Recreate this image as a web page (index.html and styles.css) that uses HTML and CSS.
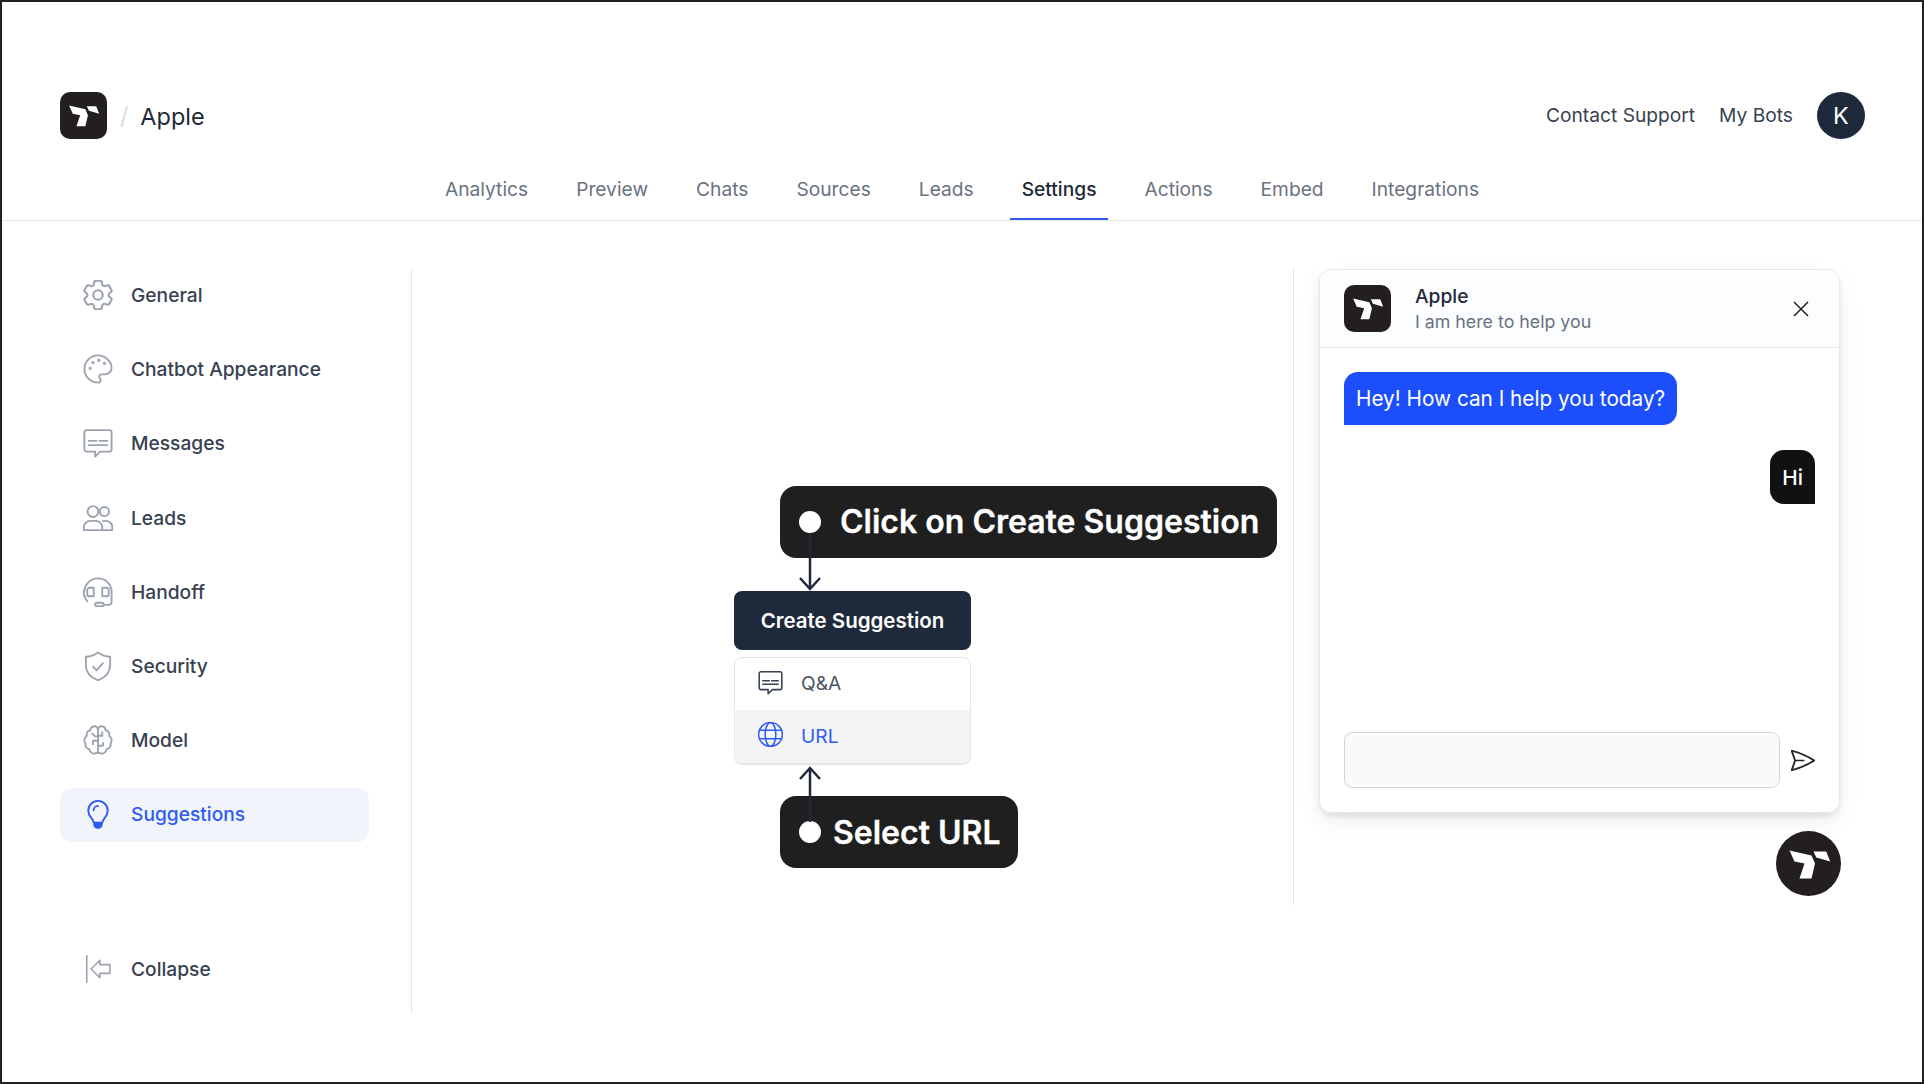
FILE: index.html
```html
<!DOCTYPE html>
<html lang="en">
<head>
  <meta charset="utf-8">
  <meta name="viewport" content="width=device-width, initial-scale=1">
  <title>Apple – Settings – Suggestions</title>
  <link rel="stylesheet" href="styles.css">
</head>

<body>
  <!-- Shared icons -->
  <svg class="sprite" width="0" height="0" aria-hidden="true">
    <symbol id="mark" viewBox="0 0 150 150">
      <path fill="currentColor" d="M16.500 34.500 L82.500 49.500 L93 73.500 L82.500 118.500 L46.500 118.500 L61.500 73.500 L31.500 67.500 Z"/>
      <path fill="currentColor" d="M88.500 37.500 L126.500 37.500 L138.500 67.500 L97 55.500 Z"/>
    </symbol>
    <symbol id="i-msg" viewBox="1.500 1.500 21 21">
      <path d="M4 3h16a1.500 1.500 0 0 1 1.500 1.500v12a1.500 1.500 0 0 1-1.500 1.500h-6.500l-3.500 3.500V18H4a1.500 1.500 0 0 1-1.500-1.500v-12A1.500 1.500 0 0 1 4 3z"/>
      <path d="M5.500 10.500h5.500M13 10.500h5.500M5.500 13.500h13"/>
    </symbol>
  </svg>

  <div class="frame">
    <header class="topbar">
      <div class="brand">
        <span class="logo"><svg><use href="#mark"/></svg></span>
        <span class="slash">/</span>
        <span class="brand-name">Apple</span>
      </div>
      <div class="top-links">
        <a href="#">Contact Support</a>
        <a href="#">My Bots</a>
        <span class="avatar">K</span>
      </div>
    </header>

    <nav class="tabs">
      <a href="#">Analytics</a>
      <a href="#">Preview</a>
      <a href="#">Chats</a>
      <a href="#">Sources</a>
      <a href="#">Leads</a>
      <a href="#" class="active">Settings</a>
      <a href="#">Actions</a>
      <a href="#">Embed</a>
      <a href="#">Integrations</a>
    </nav>

    <main class="main">
      <aside class="sidebar">
        <a href="#" class="side-item">
          <svg class="side-icon" viewBox="2.500 2.500 19 19"><path d="M9.594 3.940c.09-.542.56-.94 1.110-.94h2.593c.55 0 1.020.398 1.110.94l.213 1.281c.063.374.313.686.645.87.074.04.147.083.22.127.324.196.72.257 1.075.124l1.217-.456a1.125 1.125 0 011.370.49l1.296 2.247a1.125 1.125 0 01-.26 1.431l-1.003.827c-.293.24-.438.613-.431.992a6.759 6.759 0 010 .255c-.007.378.138.75.43.99l1.005.828c.424.35.534.954.26 1.430l-1.298 2.247a1.125 1.125 0 01-1.369.491l-1.217-.456c-.355-.133-.75-.072-1.076.124a6.570 6.570 0 01-.22.128c-.331.183-.581.495-.644.869l-.213 1.280c-.09.543-.56.941-1.110.941h-2.594c-.55 0-1.020-.398-1.110-.94l-.213-1.281c-.062-.374-.312-.686-.644-.87a6.520 6.520 0 01-.22-.127c-.325-.196-.72-.257-1.076-.124l-1.217.456a1.125 1.125 0 01-1.369-.49l-1.297-2.247a1.125 1.125 0 01.26-1.431l1.004-.827c.292-.24.437-.613.43-.992a6.932 6.932 0 010-.255c.007-.378-.138-.75-.43-.99l-1.004-.828a1.125 1.125 0 01-.26-1.430l1.297-2.247a1.125 1.125 0 011.370-.491l1.216.456c.356.133.751.072 1.076-.124.072-.044.146-.087.22-.128.332-.183.582-.495.644-.869l.214-1.281z"/><circle cx="12" cy="12" r="3"/></svg>
          General
        </a>
        <a href="#" class="side-item">
          <svg class="side-icon" viewBox="1.500 1.500 21 21"><path d="M12 2.500a9.500 9.500 0 1 0 0 19c1.100 0 1.800-.8 1.800-1.700 0-.5-.2-.9-.5-1.200-.3-.3-.5-.7-.5-1.100 0-.9.8-1.700 1.700-1.700h2.200c2.600 0 4.800-2 4.800-4.500 0-4.700-4.500-8.800-9.500-8.800z"/><circle cx="6.500" cy="11.500" r=".5"/><circle cx="8.500" cy="7.500" r=".5"/><circle cx="12.500" cy="6" r=".5"/><circle cx="16.500" cy="8" r=".5"/></svg>
          Chatbot Appearance
        </a>
        <a href="#" class="side-item">
          <svg class="side-icon"><use href="#i-msg"/></svg>
          Messages
        </a>
        <a href="#" class="side-item">
          <svg class="side-icon" viewBox="1.500 1.500 21 21"><circle cx="8.500" cy="7.500" r="3.800"/><circle cx="16.500" cy="7.500" r="3.200"/><path d="M2 20.500v-1.800A4.700 4.700 0 0 1 6.700 14h3.600a4.700 4.700 0 0 1 4.700 4.700v1.800z"/><path d="M15.500 14.200c.5-.1 1-.2 1.500-.2h.5a4.500 4.500 0 0 1 4.500 4.500v2h-7"/></svg>
          Leads
        </a>
        <a href="#" class="side-item">
          <svg class="side-icon" viewBox="1.500 1.500 21 21"><path d="M2.500 14.500c-.7-1-.5-3 0-3.500C3 6 7 2.500 12 2.500S21 6 21.500 11v8a2 2 0 0 1-2 2H16"/><path d="M2.500 11a1.500 1.500 0 0 0 0 3.500c.3 1.500 1 2.800 2 4"/><rect x="10" y="19.500" width="6" height="2.500" rx="1.250"/><path d="M9 9H6a1.500 1.500 0 0 0-1.500 1.500v3A1.500 1.500 0 0 0 6 15h3zM15 9h3a1.500 1.500 0 0 1 1.500 1.500v3A1.500 1.500 0 0 1 18 15h-3z"/></svg>
          Handoff
        </a>
        <a href="#" class="side-item">
          <svg class="side-icon" viewBox="1.500 1.500 21 21"><path d="M12 2.500c2.500 1.800 5.200 2.800 8.500 3v6c0 5-3.300 8.500-8.500 10.500-5.200-2-8.500-5.500-8.500-10.500v-6c3.300-.2 6-1.200 8.500-3z"/><path d="M8.500 12.500l2.500 2.500 4.500-5"/></svg>
          Security
        </a>
        <a href="#" class="side-item">
          <svg class="side-icon" viewBox="1.500 1.500 21 21"><path d="M12 4.500v16.500M12 4.500C11.500 3 10.200 2.200 9 2.500 7.500 2.800 6.700 4 6.700 5.200 4.800 5.500 3.800 7 4.200 9 2.500 10 1.800 12.800 3.300 14.500c-.5 2 .7 3.700 2.700 4 .5 2 2 3.300 3.500 3 1.500-.2 2.500-.8 2.500-.5"/><path d="M12 4.500c.5-1.500 1.800-2.300 3-2 1.500.3 2.300 1.500 2.300 2.700 1.900.3 2.900 1.800 2.500 3.800 1.700 1 2.400 3.800.9 5.500.5 2-.7 3.700-2.700 4-.5 2-2 3.300-3.500 3-1.500-.2-2.500-.8-2.500-.5"/><path d="M12 12.500H8.500v2.500M8 7.500l2 2h2M12 9h3V6.500M12 16h3.500v-2"/></svg>
          Model
        </a>
        <a href="#" class="side-item active">
          <svg class="side-icon" viewBox="0 0 24 24"><path d="M12 1.500a7.800 7.800 0 0 0-7.800 7.800c0 2.800 1.400 4.500 2.700 6.200.9 1.200 1.500 2.300 1.700 3.500h6.800c.2-1.200.8-2.300 1.700-3.500 1.300-1.700 2.700-3.400 2.700-6.200A7.800 7.800 0 0 0 12 1.500z"/><path class="fill" d="M9 20h6v.3a2.700 2.700 0 0 1-2.700 2.700h-.6A2.700 2.700 0 0 1 9 20.300z"/><path d="M8.500 9a3.500 3.500 0 0 1 3.500-3.500"/></svg>
          Suggestions
        </a>
        <a href="#" class="side-item collapse">
          <svg class="side-icon" viewBox="0 0 24 24"><path d="M3 1.500v21"/><path d="M13.500 5 L6.500 12 L13.500 19 V15.500 H21.500 V8.500 H13.500 Z" stroke-linejoin="round"/></svg>
          Collapse
        </a>
      </aside>

      <section class="content">
        <div class="suggest">
          <button class="create-btn">Create Suggestion</button>
          <div class="menu">
            <div class="menu-row">
              <svg class="menu-icon"><use href="#i-msg"/></svg>
              Q&amp;A
            </div>
            <div class="menu-row selected">
              <svg class="menu-icon" viewBox="1.500 1.500 21 21"><circle cx="12" cy="12" r="10"/><ellipse cx="12" cy="12" rx="4.500" ry="10"/><path d="M2.800 8.500h18.400M2.800 15.500h18.400"/></svg>
              URL
            </div>
          </div>

          <!-- Callouts of the walkthrough -->
          <div class="callout callout-top"><span class="dot"></span>Click on Create Suggestion</div>
          <svg class="arrow arrow-down" viewBox="0 0 22 58"><path d="M11 0V56M1 45l10 11 10-11"/></svg>
          <div class="callout callout-bottom"><span class="dot"></span>Select URL</div>
          <svg class="arrow arrow-up" viewBox="0 0 22 56"><path d="M11 56V2M1 13L11 2l10 11"/></svg>
        </div>
      </section>

      <section class="preview">
        <div class="chat">
          <div class="chat-head">
            <span class="logo"><svg><use href="#mark"/></svg></span>
            <div class="chat-title">
              <strong>Apple</strong>
              <span>I am here to help you</span>
            </div>
            <svg class="close" viewBox="0 0 16 16"><path d="M1 1l14 14M15 1L1 15"/></svg>
          </div>
          <div class="chat-body">
            <div class="bubble bot">Hey! How can I help you today?</div>
            <div class="bubble user">Hi</div>
          </div>
          <div class="chat-input">
            <div class="input-box"></div>
            <svg class="send" viewBox="2.700 2.500 19.400 19" preserveAspectRatio="none"><path d="M6 12L3.269 3.126A59.768 59.768 0 0121.485 12 59.770 59.770 0 013.270 20.876L5.999 12zm0 0h7.500"/></svg>
          </div>
        </div>
        <span class="fab"><svg><use href="#mark"/></svg></span>
      </section>
    </main>
  </div>
</body>
</html>
```

FILE: styles.css
```css
/* Reset & variables */
* { box-sizing: border-box; margin: 0; padding: 0; }
:root {
  --ink: #1f2937;
  --text: #374151;
  --muted: #6b7280;
  --line: #e5e7eb;
  --blue: #2f5bf0;
  --navy: #1e293b;
  --black: #231f20;
}
html, body { height: 100%; }
body {
  font-family: "Inter", "Liberation Sans", sans-serif;
  font-size: 19.2px;
  color: var(--text);
  background: #fff;
}
a { color: inherit; text-decoration: none; }
.sprite { position: absolute; }

.frame {
  height: 100vh;
  border: 2px solid #222;
  display: flex;
  flex-direction: column;
  overflow: hidden;
}

/* Top bar */
.topbar {
  display: flex;
  justify-content: space-between;
  align-items: center;
  margin-top: 90px;
  padding: 0 57px 0 58px;
}
.brand { display: flex; align-items: center; }
.logo {
  width: 47px;
  height: 47px;
  flex: none;
  border-radius: 10px;
  background: var(--black);
  color: #fff;
  display: flex;
  align-items: center;
  justify-content: center;
}
.logo svg { width: 37px; height: 37px; }
.slash {
  margin: 0 12px 0 13px;
  font-size: 24px;
  font-weight: 300;
  color: #d1d5db;
}
.brand-name { font-size: 23.500px; color: var(--ink); margin-top: 2px; }
.top-links { display: flex; align-items: center; gap: 24px; }
.top-links a { margin-bottom: 1px; }
.avatar {
  width: 48px;
  height: 47px;
  border-radius: 50%;
  background: var(--navy);
  color: #fff;
  font-size: 23.500px;
  display: flex;
  align-items: center;
  justify-content: center;
}

/* Tabs */
.tabs {
  display: flex;
  justify-content: center;
  gap: 24px;
  margin-top: 20px;
  border-bottom: 1px solid var(--line);
}
.tabs a {
  padding: 18px 12px 17px;
  line-height: 24px;
  border-bottom: 2px solid transparent;
  color: var(--muted);
}
.tabs a.active {
  color: var(--ink);
  font-weight: 500;
  border-bottom-color: var(--blue);
}

/* Main area */
.main { flex: 1; display: flex; align-items: flex-start; padding-top: 48px; }

.sidebar {
  width: 410px;
  height: 744px;
  flex: none;
  padding: 0 42px 16px 58px;
  border-right: 1px solid var(--line);
  display: flex;
  flex-direction: column;
  gap: 20.200px;
}
.side-item {
  height: 54px;
  flex: none;
  padding: 0 0 2px 23px;
  border-radius: 12px;
  display: flex;
  align-items: center;
  gap: 18px;
  font-weight: 450;
}
.side-icon {
  width: 30px;
  height: 30px;
  flex: none;
  fill: none;
  stroke: #9ca3af;
  stroke-width: 1.300;
  stroke-linecap: round;
  stroke-linejoin: round;
}
.side-item.active { background: #f1f4fa; color: var(--blue); }
.side-item.active .side-icon { stroke: var(--blue); stroke-width: 1.500; }
.side-item.active .fill { fill: var(--blue); }
.side-item.collapse { margin-top: auto; }

/* Centre column */
.content {
  flex: 1;
  height: 636px;
  padding-top: 322px;
  border-right: 1px solid var(--line);
  display: flex;
  justify-content: center;
}
.suggest { position: relative; width: 237px; height: 174px; }
.create-btn {
  width: 100%;
  height: 59px;
  border: 0;
  border-radius: 8px;
  background: var(--navy);
  color: #fff;
  font: 600 20.500px "Inter", "Liberation Sans", sans-serif;
}
.menu {
  margin-top: 7px;
  height: 108px;
  border: 1px solid var(--line);
  border-bottom-width: 2px;
  border-radius: 8px;
  overflow: hidden;
}
.menu-row {
  height: 52px;
  padding: 0 0 3px 23px;
  display: flex;
  align-items: center;
  gap: 18px;
  font-size: 19.200px;
  color: #4b5563;
}
.menu-row.selected { height: 54px; background: #f3f4f6; color: var(--blue); }
.menu-icon {
  width: 25px;
  height: 25px;
  fill: none;
  stroke: #374151;
  stroke-width: 1.300;
  stroke-linecap: round;
  stroke-linejoin: round;
  margin-top: -1px;
}
.selected .menu-icon { stroke: var(--blue); margin-top: -3px; }

.callout {
  position: absolute;
  left: 46px;
  height: 72px;
  padding: 0 18px 0 19px;
  border-radius: 16px;
  background: #1f1f1f;
  color: #fff;
  font-size: 32px;
  font-weight: 600;
  -webkit-text-stroke: 0.300px #fff;
  white-space: nowrap;
  display: flex;
  align-items: center;
}
.callout-top { top: -105px; gap: 19px; padding-bottom: 1px; }
.callout-bottom { top: 205px; gap: 12px; padding-right: 17px; }
.dot { width: 22px; height: 22px; flex: none; border-radius: 50%; background: #fff; }
.arrow {
  position: absolute;
  left: 65px;
  width: 22px;
  fill: none;
  stroke: var(--navy);
  stroke-width: 2.500;
}
.arrow-down { top: -58px; height: 58px; }
.arrow-up { top: 175px; height: 56px; }

/* Chat preview */
.preview { flex: none; width: 628px; padding-left: 25px; }
.chat {
  width: 521px;
  height: 544px;
  border: 1px solid var(--line);
  border-radius: 12px;
  box-shadow: 0 4px 6px -1px rgba(0,0,0,0.1), 0 10px 25px rgba(0,0,0,0.06);
  display: flex;
  flex-direction: column;
  overflow: hidden;
}
.chat-head {
  height: 78px;
  flex: none;
  padding: 0 30px 0 24px;
  background: #fcfdff;
  border-bottom: 1px solid var(--line);
  display: flex;
  align-items: center;
}
.chat-title { flex: 1; margin-left: 24px; display: flex; flex-direction: column; gap: 2px; }
.chat-title strong { font-weight: 500; color: var(--ink); line-height: 24px; }
.chat-title span { font-size: 17.800px; color: var(--muted); line-height: 24px; }
.close { width: 16px; height: 16px; fill: none; stroke: #222; stroke-width: 1.500; }
.chat-body {
  flex: 1;
  padding: 24px;
  display: flex;
  flex-direction: column;
  gap: 25px;
  font-size: 20.750px;
}
.bubble {
  height: 53px;
  padding: 0 12px;
  border-radius: 14px;
  color: #fff;
  display: flex;
  align-items: center;
  width: fit-content;
}
.bubble.bot { background: #1c4efc; border-bottom-left-radius: 0; }
.bubble.user {
  height: 54px;
  align-self: flex-end;
  background: #111;
  font-weight: 500;
  border-bottom-right-radius: 0;
}
.chat-input { display: flex; align-items: center; gap: 11px; padding: 0 24px 24px; }
.input-box {
  width: 437px;
  height: 56px;
  background: #f9fafb;
  border: 1px solid #d1d5db;
  border-radius: 8px;
}
.send {
  width: 24px;
  height: 21px;
  fill: none;
  stroke: #222;
  stroke-width: 1.500;
  stroke-linejoin: round;
}
.fab {
  width: 65px;
  height: 65px;
  margin: 18px 0 0 457px;
  border-radius: 50%;
  background: var(--black);
  color: #fff;
  display: flex;
  align-items: center;
  justify-content: center;
}
.fab svg { width: 50px; height: 50px; }
```
